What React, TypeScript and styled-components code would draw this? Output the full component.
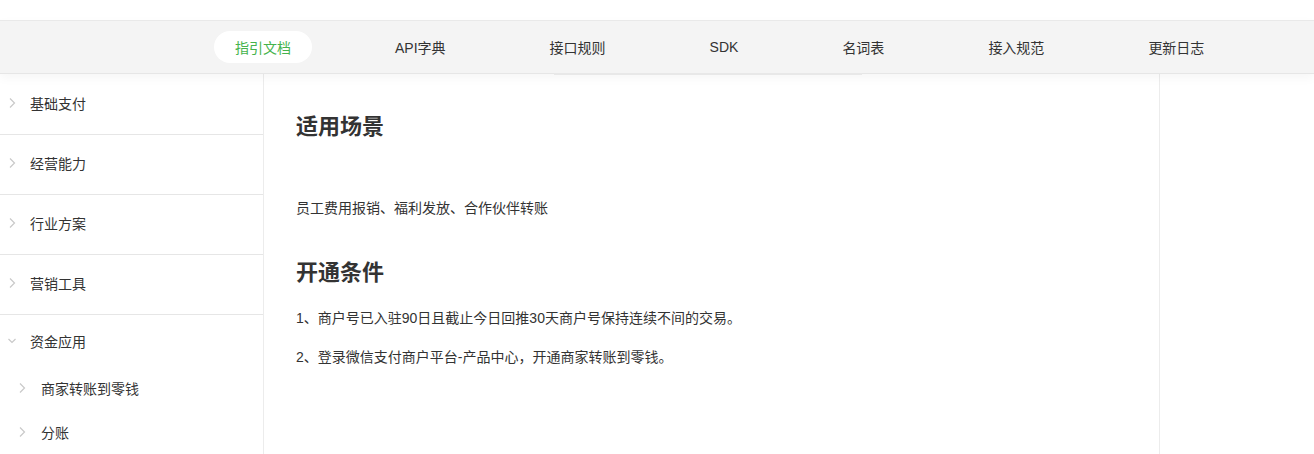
import styled, { createGlobalStyle } from 'styled-components';

const GlobalStyle = createGlobalStyle`
  html, body, #root {
    margin: 0;
    height: 100%;
  }
  body {
    background: #fff;
    font-family: "Liberation Sans", "Noto Sans CJK SC", sans-serif;
    color: #333;
  }
  * {
    box-sizing: border-box;
  }
`;

const Page = styled.div`
  display: flex;
  flex-direction: column;
  height: 100%;
  padding-top: 20px;
`;

const Nav = styled.nav`
  position: relative;
  z-index: 2;
  height: 54px;
  flex-shrink: 0;
  display: flex;
  align-items: center;
  gap: 62px;
  padding-left: 214px;
  background: #f4f4f4;
  border-top: 1px solid #e9e9e9;
  border-bottom: 1px solid #e6e6e6;
  box-shadow: 0 4px 10px rgba(0, 0, 0, 0.04);
`;

const NavTrack = styled.span`
  position: absolute;
  left: 554px;
  bottom: -2px;
  width: 308px;
  height: 2px;
  background: #e8e8e8;
`;

const NavItem = styled.a<{ $active?: boolean }>`
  height: 32px;
  padding: 0 21px;
  display: flex;
  align-items: center;
  border-radius: 16px;
  font-size: 14px;
  white-space: nowrap;
  color: ${(p) => (p.$active ? '#45b34c' : '#333')};
  background: ${(p) => (p.$active ? '#fff' : 'transparent')};
  cursor: pointer;
`;

const Body = styled.div`
  flex: 1;
  display: grid;
  grid-template-columns: 264px 896px 1fr;
  min-height: 0;
`;

const Sidebar = styled.aside`
  border-right: 1px solid #ececec;
  padding-top: 1px;
  overflow: hidden;
`;

const Row = styled.div<{ $open?: boolean }>`
  height: ${(p) => (p.$open ? '52px' : '60px')};
  padding-top: ${(p) => (p.$open ? '3px' : '0')};
  padding-bottom: 3px;
  display: flex;
  align-items: center;
  gap: 14px;
  padding-left: 8px;
  font-size: 14px;
  color: #333;
  border-bottom: ${(p) => (p.$open ? 'none' : '1px solid #e6e6e6')};
`;

const SubRow = styled.div`
  height: 44px;
  padding-bottom: 3px;
  display: flex;
  align-items: center;
  gap: 15px;
  padding-left: 18px;
  font-size: 14px;
  color: #333;
`;

const Main = styled.main`
  border-right: 1px solid #ececec;
  padding: 38px 32px 0;
`;

const Heading = styled.h2<{ $top?: number }>`
  margin: ${(p) => p.$top ?? 0}px 0 0;
  font-size: 22px;
  line-height: 30px;
  font-weight: bold;
  color: #333;
`;

const Para = styled.p<{ $top: number }>`
  margin: ${(p) => p.$top}px 0 0;
  font-size: 14px;
  line-height: 24px;
  color: #333;
`;

const Chevron = ({ down }: { down?: boolean }) =>
  down ? (
    <svg width="8" height="10" viewBox="0 0 8 10">
      <polyline points="0.5,3 4,6.5 7.5,3" fill="none" stroke="#c9c9c9" strokeWidth="1.2" />
    </svg>
  ) : (
    <svg width="8" height="12" viewBox="0 0 8 12">
      <polyline points="2,1.5 6.5,6 2,10.5" fill="none" stroke="#c9c9c9" strokeWidth="1.2" />
    </svg>
  );

const tabs = ['指引文档', 'API字典', '接口规则', 'SDK', '名词表', '接入规范', '更新日志'];
const groups = ['基础支付', '经营能力', '行业方案', '营销工具'];
const subs = ['商家转账到零钱', '分账'];

export default function App() {
  return (
    <>
      <GlobalStyle />
      <Page>
        <Nav>
          {tabs.map((t, i) => (
            <NavItem key={t} $active={i === 0}>
              {t}
            </NavItem>
          ))}
          <NavTrack />
        </Nav>
        <Body>
          <Sidebar>
            {groups.map((g) => (
              <Row key={g}>
                <Chevron />
                {g}
              </Row>
            ))}
            <Row $open>
              <Chevron down />
              资金应用
            </Row>
            {subs.map((s) => (
              <SubRow key={s}>
                <Chevron />
                {s}
              </SubRow>
            ))}
          </Sidebar>
          <Main>
            <Heading>适用场景</Heading>
            <Para $top={54}>员工费用报销、福利发放、合作伙伴转账</Para>
            <Heading $top={38}>开通条件</Heading>
            <Para $top={18}>1、商户号已入驻90日且截止今日回推30天商户号保持连续不间的交易。</Para>
            <Para $top={15}>2、登录微信支付商户平台-产品中心，开通商家转账到零钱。</Para>
          </Main>
          <div />
        </Body>
      </Page>
    </>
  );
}
